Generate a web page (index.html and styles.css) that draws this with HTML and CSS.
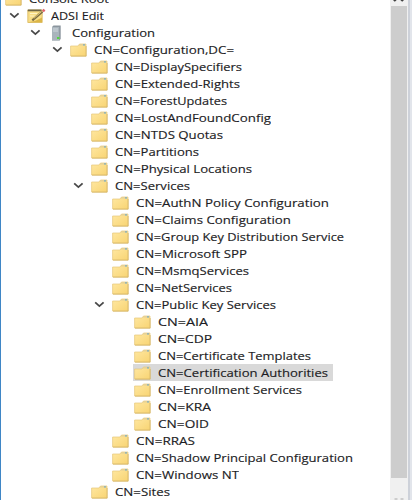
FILE: index.html
```html
<!DOCTYPE html>
<html lang="en">
<head>
<meta charset="utf-8">
<title>ADSI Edit</title>
<link rel="stylesheet" href="styles.css">
</head>
<body>
<svg class="defs" aria-hidden="true">
  <defs>
    <linearGradient id="gold" x1="0" y1="0" x2="1" y2="1">
      <stop offset="0" stop-color="#ffe8a2"/><stop offset="1" stop-color="#f8d473"/>
    </linearGradient>
    <symbol id="folder" viewBox="0 0 17 14">
      <path d="M.6 3H8L9.5 1H16v12H.6z" fill="url(#gold)" stroke="#e6c778" stroke-width=".7"/>
      <path d="M9.6 1.2h6v1.4H8.8z" fill="#e2cf9a"/>
      <path d="M13 1.3h2v1.3h-2z" fill="#7fadbd"/>
      <path d="M1 13.2h15.2V3" fill="none" stroke="#d2b05c" stroke-width=".7"/>
    </symbol>
    <symbol id="edit" viewBox="0 0 20 16">
      <path d="M.8 2h14.4v12.5H.8z" fill="#f8dd86" stroke="#d9b75a" stroke-width=".8"/>
      <path d="M.8 1.5h13.7v1.8H.8z" fill="#6f6646"/>
      <path d="M3 5.5h7M3 8h4.5" stroke="#fff3c4"/>
      <path d="M1 14.2h14V9.5L8 13z" fill="#dcb648"/>
      <path d="M5.3 12.3 15.4 3.6" stroke="#7a6c42" stroke-width="2.2"/>
      <path d="M6.8 10.4 14.6 3.6" stroke="#ead083" stroke-width=".9"/>
      <path d="m15.8 3.2 1.8-1.5" stroke="#e0606c" stroke-width="2.6"/>
    </symbol>
    <symbol id="server" viewBox="0 0 11 16">
      <path d="M1 2 2.5.5h7.2v13L8.8 15.5H1z" fill="#8b959e"/>
      <path d="M1 2h7.2v13.3H1z" fill="#a9b4bc"/>
      <path d="M2 4h5M2 6h5" stroke="#d0d8de"/>
      <path d="M6 12h2.5v2H6z" fill="#55d543"/>
    </symbol>
    <symbol id="chevron" viewBox="0 0 11 7">
      <path d="m1.2 1.3 4.2 3.8 4.2-3.8" fill="none" stroke="#484848" stroke-width="1.8"/>
    </symbol>
  </defs>
</svg>
<div class="window">
  <main class="tree" id="tree"></main>
  <aside class="scrollbar">
    <svg class="up" viewBox="0 0 12 6"><path d="M1 1l2-2M10 1L8-1" stroke="#404040" stroke-width="2.4" fill="none"/></svg>
    <div class="thumb"></div>
    <svg class="down" viewBox="0 0 12 3"><path d="M1.5 2h3M7.5 2h3" stroke="#aaa" stroke-width="1.2"/></svg>
  </aside>
</div>
<script src="tree.js"></script>
</body>
</html>
```
FILE: styles.css
```css
body { margin: 0; width: 412px; height: 500px; overflow: hidden; background: #fff; }
.defs { position: absolute; width: 0; height: 0; }
.window { display: flex; box-sizing: border-box; width: 412px; height: 500px; border-left: 1px solid #3f86c6; }
.tree { flex: 1; min-width: 0; margin: -10px 0 0 -13.6px; }
.row { display: flex; align-items: center; height: 17px; }
.twist { flex: none; width: 11px; height: 7px; margin-right: 7px; }
.icon { flex: none; width: 17px; height: 14px; margin-right: 5px; }
.icon.edit { width: 20px; height: 16px; margin-right: 2px; }
.icon.server { width: 11px; height: 16px; margin: 0 8px 0 3px; }
.label { height: 16px; padding: 0 2px; font: 500 11.5px/16px "Open Sans", "Noto Sans", sans-serif; white-space: pre; }
.label svg { display: block; }
.label text { fill: #1c1c24; stroke: #1c1c24; stroke-width: .15px; }
.item { display: flex; align-items: center; }
.selected { height: 17px; margin-left: -1px; padding: 0 3px 0 1px; background: #d9d9d9; }
.scrollbar { display: flex; flex-direction: column; align-items: center; box-sizing: border-box; width: 22px; padding-right: 5px; background: linear-gradient(90deg, #f0f0f0 18px, #cdd1d9 18px 20px, #e2e5eb 20px); }
.up { width: 12px; height: 6px; }
.thumb { width: 16px; height: 472px; background: #cdcdcd; }
.down { width: 12px; height: 3px; margin-top: 19px; }
```
FILE: tree.js
```js
// Each entry: depth, label, label width, icon, expanded, selected.
const rows = [
  [0, "Console Root", 80], [1, "ADSI Edit", 53, "edit", 1], [2, "Configuration", 83, "server", 1],
  [3, "CN=Configuration,DC=", 140, "folder", 1],
  [4, "CN=DisplaySpecifiers", 127], [4, "CN=Extended-Rights", 125], [4, "CN=ForestUpdates", 112],
  [4, "CN=LostAndFoundConfig", 156], [4, "CN=NTDS Quotas", 108], [4, "CN=Partitions", 84],
  [4, "CN=Physical Locations", 137], [4, "CN=Services", 75, "folder", 1],
  [5, "CN=AuthN Policy Configuration", 193], [5, "CN=Claims Configuration", 155],
  [5, "CN=Group Key Distribution Service", 208], [5, "CN=Microsoft SPP", 111],
  [5, "CN=MsmqServices", 113], [5, "CN=NetServices", 96], [5, "CN=Public Key Services", 140, "folder", 1],
  [6, "CN=AIA", 50], [6, "CN=CDP", 54], [6, "CN=Certificate Templates", 153],
  [6, "CN=Certification Authorities", 170, "folder", 0, 1], [6, "CN=Enrollment Services", 144],
  [6, "CN=KRA", 53], [6, "CN=OID", 51],
  [5, "CN=RRAS", 59], [5, "CN=Shadow Principal Configuration", 217], [5, "CN=Windows NT", 103],
  [4, "CN=Sites", 55]
];
document.getElementById("tree").innerHTML = rows.map(([depth, text, width, icon = "folder", open, selected]) => `
  <div class="row" style="padding-left:${(depth * 21.4).toFixed(1)}px">
    <svg class="twist">${open ? '<use href="#chevron"/>' : ""}</svg>
    <div class="item${selected ? " selected" : ""}">
      <svg class="icon ${icon}"><use href="#${icon}"/></svg>
      <span class="label"><svg width="${width}" height="16"><text x="0" y="12" textLength="${width}" lengthAdjust="spacingAndGlyphs">${text}</text></svg></span>
    </div>
  </div>`).join("");
```
